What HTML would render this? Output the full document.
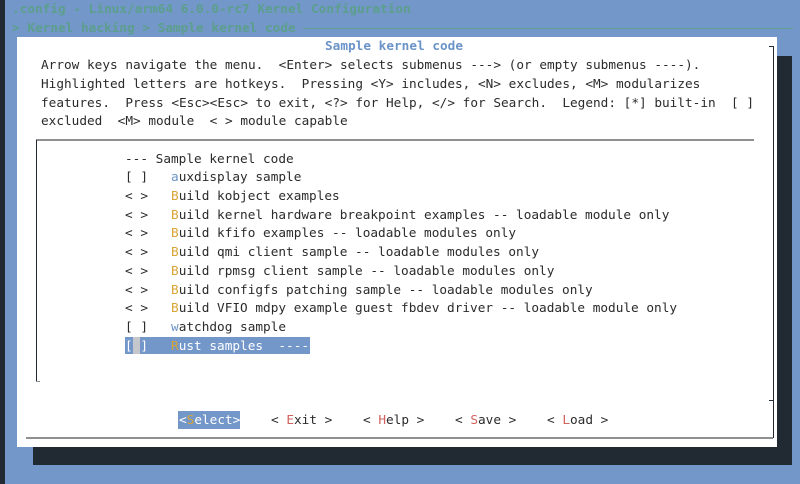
<!DOCTYPE html>
<html><head><meta charset="utf-8"><style>
*{margin:0;padding:0}
body{width:800px;height:484px;background:#7397c9;position:relative;overflow:hidden;font-family:"DejaVu Sans Mono","Liberation Mono",monospace;font-size:12.74px;color:#2b2b2b}
.a{position:absolute;white-space:pre;line-height:18.7px;height:18.7px;margin-top:1px}
.t{color:#5c9f8c;font-weight:bold}
.b{color:#6a93c8}
.y{color:#d9a534}
.r{color:#d2605c}
.w{color:#fff}
</style></head><body>
<div style="position:absolute;left:0;top:0;width:5px;height:484px;background:#212a33"></div>
<div class="a t" style="left:12px;top:0">.config - Linux/arm64 6.0.0-rc7 Kernel Configuration</div>
<div class="a t" style="left:12px;top:18.7px">&gt; Kernel hacking &gt; Sample kernel code</div>
<div style="position:absolute;left:303px;top:28px;width:490px;height:1px;background:#5c9f8c"></div>
<div style="position:absolute;left:33px;top:56px;width:759px;height:409px;background:#212a33"></div>
<div style="position:absolute;left:17px;top:37px;width:760px;height:410px;background:#fff"></div>
<div style="position:absolute;left:773px;top:46px;width:1px;height:392px;background:#212a33"></div>
<div style="position:absolute;left:769px;top:46px;width:5px;height:1px;background:#212a33"></div>
<div style="position:absolute;left:769px;top:400px;width:5px;height:1px;background:#212a33"></div>
<div style="position:absolute;left:26px;top:437px;width:747px;height:2px;background:#909090"></div>
<div style="position:absolute;left:36px;top:139px;width:718px;height:2px;background:#909090"></div>
<div style="position:absolute;left:36px;top:140px;width:1px;height:242px;background:#212a33"></div>
<div style="position:absolute;left:36px;top:381px;width:4px;height:1px;background:#909090"></div>
<div class="a b" style="left:325px;top:37.4px;font-weight:bold">Sample kernel code</div>
<div class="a" style="left:41px;top:56.1px">Arrow keys navigate the menu.  &lt;Enter&gt; selects submenus ---&gt; (or empty submenus ----).</div>
<div class="a" style="left:41px;top:74.8px">Highlighted letters are hotkeys.  Pressing &lt;Y&gt; includes, &lt;N&gt; excludes, &lt;M&gt; modularizes</div>
<div class="a" style="left:41px;top:93.5px">features.  Press &lt;Esc&gt;&lt;Esc&gt; to exit, &lt;?&gt; for Help, &lt;/&gt; for Search.  Legend: [*] built-in  [ ]</div>
<div class="a" style="left:41px;top:112.2px">excluded  &lt;M&gt; module  &lt; &gt; module capable</div>
<div class="a" style="left:125px;top:149.6px">--- Sample kernel code</div>
<div class="a" style="left:125px;top:168.3px">[ ]   <span class="b">a</span>uxdisplay sample</div>
<div class="a" style="left:125px;top:187px">&lt; &gt;   <span class="y">B</span>uild kobject examples</div>
<div class="a" style="left:125px;top:205.7px">&lt; &gt;   <span class="y">B</span>uild kernel hardware breakpoint examples -- loadable module only</div>
<div class="a" style="left:125px;top:224.4px">&lt; &gt;   <span class="y">B</span>uild kfifo examples -- loadable modules only</div>
<div class="a" style="left:125px;top:243.1px">&lt; &gt;   <span class="y">B</span>uild qmi client sample -- loadable modules only</div>
<div class="a" style="left:125px;top:261.8px">&lt; &gt;   <span class="y">B</span>uild rpmsg client sample -- loadable modules only</div>
<div class="a" style="left:125px;top:280.5px">&lt; &gt;   <span class="y">B</span>uild configfs patching sample -- loadable modules only</div>
<div class="a" style="left:125px;top:299.2px">&lt; &gt;   <span class="y">B</span>uild VFIO mdpy example guest fbdev driver -- loadable module only</div>
<div class="a" style="left:125px;top:317.9px">[ ]   <span class="b">w</span>atchdog sample</div>
<div style="position:absolute;left:125px;top:337px;width:185px;height:17px;background:#7397c9"></div>
<div style="position:absolute;left:133px;top:337px;width:7px;height:17px;background:#c4c8cc"></div>
<div class="a w" style="left:125px;top:336.6px">[ ]   <span class="y">R</span>ust samples  ----</div>
<div style="position:absolute;left:178px;top:411px;width:62px;height:18px;background:#7397c9"></div>
<div class="a w" style="left:179px;top:411.4px">&lt;<span class="y">S</span>elect&gt;</div>
<div class="a" style="left:271px;top:411.4px">&lt; <span class="r">E</span>xit &gt;</div>
<div class="a" style="left:363px;top:411.4px">&lt; <span class="r">H</span>elp &gt;</div>
<div class="a" style="left:455px;top:411.4px">&lt; <span class="r">S</span>ave &gt;</div>
<div class="a" style="left:547px;top:411.4px">&lt; <span class="r">L</span>oad &gt;</div>
</body></html>
